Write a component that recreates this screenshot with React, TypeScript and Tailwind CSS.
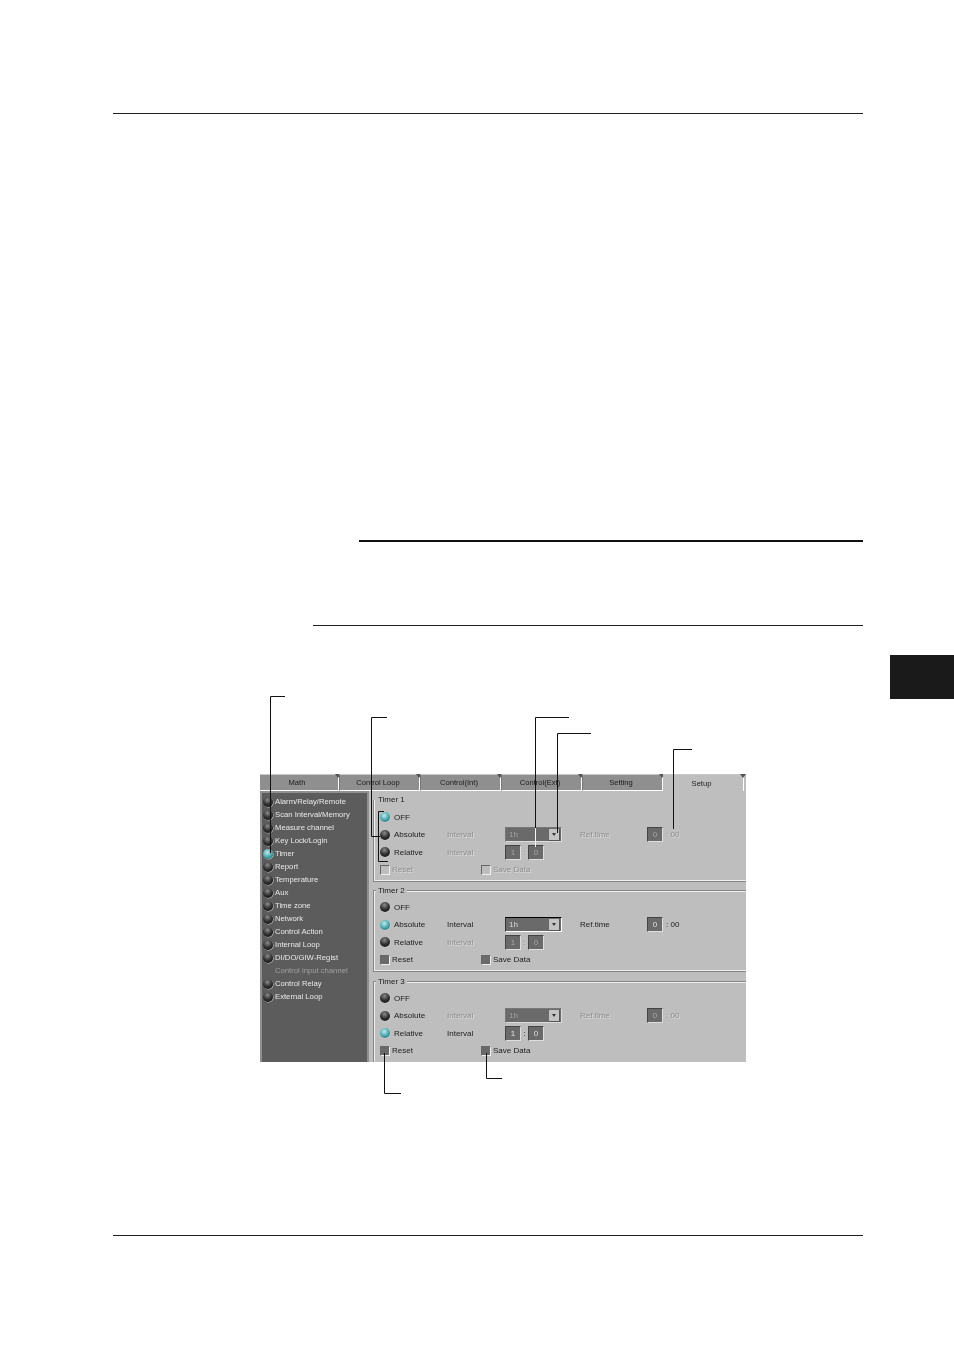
import React from "react";

const menu: [string, number][] = [
  ["Alarm/Relay/Remote", 0], ["Scan Interval/Memory", 0], ["Measure channel", 0], ["Key Lock/Login", 0],
  ["Timer", 1], ["Report", 0], ["Temperature", 0], ["Aux", 0], ["Time zone", 0], ["Network", 0],
  ["Control Action", 0], ["Internal Loop", 0], ["DI/DO/GIW-Regist", 0], ["Control input channel", 2],
  ["Control Relay", 0], ["External Loop", 0],
];

const tabs = ["Math", "Control Loop", "Control(Int)", "Control(Ext)", "Setting", "Setup"];

function Led({ on }: { on?: boolean }) {
  return (
    <span
      className={
        "block w-[10px] h-[10px] rounded-full shrink-0 shadow-[0.5px_0.5px_0_#d8d8d8] " +
        (on
          ? "bg-[radial-gradient(circle_at_42%_35%,#bfeaec,#3fa3a8_55%,#1c5c60)]"
          : "bg-[radial-gradient(circle_at_45%_30%,#8c8c8c,#303030_50%,#0c0c0c)]")
      }
    />
  );
}

const faded = "text-[#8e8e8e] [text-shadow:1px_1px_0_#dcdcdc]";
const plain = "text-[#1c1c1c]";

function Combo({ on }: { on: boolean }) {
  return (
    <div className={"w-[57px] h-[15px] flex items-center justify-between bg-[#6a6a6a] border pl-[3px] pr-px " + (on ? "border-t-black border-l-[#333] border-b-white border-r-white" : "border-t-[#777] border-l-[#777] border-b-[#dcdcdc] border-r-[#dcdcdc]")}>
      <span className={on ? "text-[#d8d8d8]" : "text-[#a0a0a0]"}>1h</span>
      <span className="w-[11px] h-[12px] bg-[#c4c4c4] border-r border-b border-[#555] flex items-center justify-center">
        <span className="w-0 h-0 border-l-[2.5px] border-r-[2.5px] border-t-[3px] border-l-transparent border-r-transparent border-t-[#333]" />
      </span>
    </div>
  );
}

function Num({ v, on }: { v: string; on: boolean }) {
  return (
    <div className={"w-[16px] h-[15px] bg-[#6a6a6a] border-t border-l border-t-[#444] border-l-[#444] border-b border-r border-b-[#dedede] border-r-[#dedede] flex items-center justify-center " + (on ? "text-[#e0e0e0]" : "text-[#a8a8a8]")}>
      {v}
    </div>
  );
}

function Check({ on, label, w }: { on: boolean; label: string; w: string }) {
  return (
    <div className={"flex items-center gap-[2px] " + w + " " + (on ? plain : faded)}>
      <span className={"block w-[10px] h-[10px] border border-t-[#666] border-l-[#666] border-b-[#eeeeee] border-r-[#eeeeee] " + (on ? "bg-[#6a6a6a]" : "bg-transparent")} />
      <span>{label}</span>
    </div>
  );
}

function Group({ title, mode, first, last }: { title: string; mode: 0 | 1 | 2; first?: boolean; last?: boolean }) {
  const enabled = mode !== 0;
  return (
    <div className="pl-[2px]">
      <div
        className={
          "relative border-l border-[#858585] pl-[6px] " +
          (first ? "pt-[8.5px] shadow-[inset_1px_0_0_#f0f0f0] " : "border-t shadow-[inset_1px_1px_0_#f0f0f0] ") +
          (last ? "pt-[7.5px] h-[90px]" : "h-[82px] border-b ") +
          (!first && !last ? "pt-[7.7px]" : "")
        }
      >
        {!last && <span className="absolute left-0 right-0 bottom-0 h-px bg-[#f0f0f0]" />}
        <span className="absolute left-[2px] -top-[6px] bg-[#bebebe] px-[2px] text-[#1c1c1c] leading-[11px]">{title}</span>
        <div className="flex items-center h-[17.5px]">
          <span className="w-[14px]"><Led on={mode === 0} /></span>
          <span className={"w-[53px] " + plain}>OFF</span>
        </div>
        <div className="flex items-center h-[17.5px]">
          <span className="w-[14px]"><Led on={mode === 1} /></span>
          <span className={"w-[53px] " + plain}>Absolute</span>
          <span className={"w-[58px] " + (mode === 1 ? plain : faded)}>Interval</span>
          <Combo on={mode === 1} />
          <span className={"ml-[18px] w-[67px] " + (mode === 1 ? plain : faded)}>Ref.time</span>
          <Num v="0" on={mode === 1} />
          <span className={"ml-[3px] " + (mode === 1 ? plain : faded)}>: 00</span>
        </div>
        <div className="flex items-center h-[17.5px]">
          <span className="w-[14px]"><Led on={mode === 2} /></span>
          <span className={"w-[53px] " + plain}>Relative</span>
          <span className={"w-[58px] " + (mode === 2 ? plain : faded)}>Interval</span>
          <Num v="1" on={mode === 2} />
          <span className={"w-[7px] text-center " + (mode === 2 ? plain : faded)}>:</span>
          <Num v="0" on={mode === 2} />
        </div>
        <div className="flex items-center h-[17.5px]">
          <Check on={enabled} label="Reset" w="w-[101px]" />
          <Check on={enabled} label="Save Data" w="w-[80px]" />
        </div>
      </div>
    </div>
  );
}

function Leaders() {
  return (
    <svg className="absolute left-0 top-0 pointer-events-none" width={954} height={1350} fill="none" strokeWidth={1}>
      <g stroke="#111111">
        <path d="M285 696.5H270.5V853" />
        <path d="M387 717.5H371.5V836.5H380" />
        <path d="M384 811.5H378.5V861.5H388" />
        <path d="M569 717.5H535.5V828" />
        <path d="M591 733.5H557.5V833" />
        <path d="M692 749.5H673.5V829" />
        <path d="M384.5 1053V1093.5H401" />
        <path d="M486.5 1053V1078.5H502" />
      </g>
      <g stroke="#f5f5f5">
        <path d="M535.5 828V847" />
      </g>
    </svg>
  );
}

export default function App() {
  return (
    <div className="relative w-[954px] h-[1350px] bg-white overflow-hidden flex flex-col font-['Liberation_Sans',Arial,sans-serif]">
      <div className="mt-[113px] ml-[113px] w-[750px] h-px bg-[#222]" />
      <div className="mt-[426px] ml-[359px] w-[504px] h-[2px] bg-[#111]" />
      <div className="mt-[83px] ml-[313px] w-[550px] h-px bg-[#222]" />
      <div className="mt-[29px] self-end w-[64px] h-[44px] bg-[#1a1a1a]" />

      <div className="mt-[75px] ml-[260px] w-[486px] h-[288px] bg-[#bebebe] flex flex-col overflow-hidden text-[8px] leading-[11px] [filter:blur(0.3px)]">
        <div className="flex h-[17px] shrink-0 -ml-[2px] text-[7.6px]">
          {tabs.map((t) => (
            <div
              key={t}
              className={
                "relative w-[81px] pr-[3px] flex items-center justify-center text-[#1c1c1c] border-t border-t-[#c8c8c8] " +
                (t === "Setup" ? "bg-[#bebebe] border-r border-r-white" : "bg-[#8f8f8f] border-b border-b-white border-r border-r-white border-l border-l-[#777]")
              }
            >
              {t}
              <span className="absolute right-[-3px] -top-px w-0 h-0 border-l-[3px] border-r-[3px] border-t-[4px] border-l-transparent border-r-transparent border-t-[#555]" />
            </div>
          ))}
        </div>
        <div className="flex flex-1 min-h-0">
          <div className="w-[109px] shrink-0 bg-[#5c5c5c] border-l-2 border-t-2 border-r-2 border-[#8f8f8f] pt-[2px] pl-[1px] text-[7.7px]">
            {menu.map(([t, s]) => (
              <div key={t} className="flex items-center h-[13px]">
                <span className="w-[10px] shrink-0">{s !== 2 && <Led on={s === 1} />}</span>
                <span className={"ml-[2px] whitespace-nowrap " + (s === 2 ? "text-[#a0a0a0]" : "text-[#e8e8e8]")}>{t}</span>
              </div>
            ))}
          </div>
          <div className="flex-1 min-w-0 pl-[2px] pt-[9px] flex flex-col">
            <Group title="Timer 1" mode={0} first />
            <div className="mt-[8px]"><Group title="Timer 2" mode={1} /></div>
            <div className="mt-[9px]"><Group title="Timer 3" mode={2} last /></div>
          </div>
        </div>
      </div>

      <div className="mt-[173px] ml-[113px] w-[750px] h-px bg-[#222]" />
      <Leaders />
    </div>
  );
}
